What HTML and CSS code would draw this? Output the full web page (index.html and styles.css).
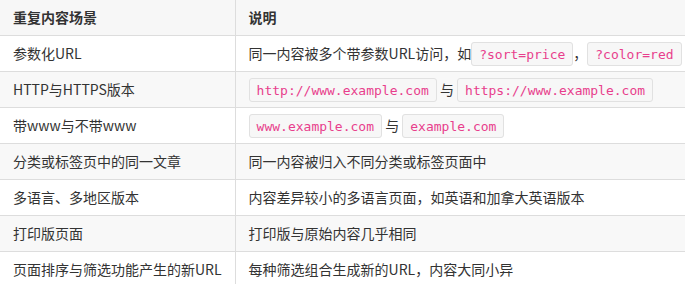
FILE: index.html
```html
<!DOCTYPE html>
<html lang="zh">
<head>
<meta charset="utf-8">
<link rel="stylesheet" href="styles.css">
</head>
<body>
<table class="tbl">
  <thead>
    <tr><th class="c1">重复内容场景</th><th>说明</th></tr>
  </thead>
  <tbody>
    <tr><td class="c1">参数化URL</td><td>同一内容被多个带参数URL访问，如<code>?sort=price</code>，<code>?color=red</code></td></tr>
    <tr class="alt"><td class="c1">HTTP与HTTPS版本</td><td><code>http://www.example.com</code> 与 <code>https://www.example.com</code></td></tr>
    <tr><td class="c1">带www与不带www</td><td><code>www.example.com</code> 与 <code>example.com</code></td></tr>
    <tr class="alt"><td class="c1">分类或标签页中的同一文章</td><td>同一内容被归入不同分类或标签页面中</td></tr>
    <tr><td class="c1">多语言、多地区版本</td><td>内容差异较小的多语言页面，如英语和加拿大英语版本</td></tr>
    <tr class="alt"><td class="c1">打印版页面</td><td>打印版与原始内容几乎相同</td></tr>
    <tr><td class="c1">页面排序与筛选功能产生的新URL</td><td>每种筛选组合生成新的URL，内容大同小异</td></tr>
  </tbody>
</table>
</body>
</html>
```

FILE: styles.css
```css
html, body {
  margin: 0;
  padding: 0;
  background: #fff;
}
body {
  font-family: "Noto Sans CJK SC", "Noto Sans", sans-serif;
  font-size: 14px;
  color: #333;
}
.tbl {
  width: 100%;
  border-collapse: collapse;
}
.tbl th, .tbl td {
  text-align: left;
  padding: 8px 13px;
  height: 19px;
  line-height: 19px;
  border-bottom: 1px solid #ddd;
  vertical-align: middle;
  white-space: nowrap;
}
.tbl th {
  font-weight: bold;
  background: #f7f7f7;
}
.tbl .c1 {
  width: 209px;
  border-right: 1px solid #ddd;
}
.tbl tr.alt td {
  background: #f8f8f8;
}
code {
  font-family: "DejaVu Sans Mono", monospace;
  font-size: 13px;
  line-height: 1;
  color: #e83e8c;
  background: #f7f7f7;
  border: 1px solid #e1e1e1;
  border-radius: 3px;
  padding: 4px 7px 3px;
}
```
